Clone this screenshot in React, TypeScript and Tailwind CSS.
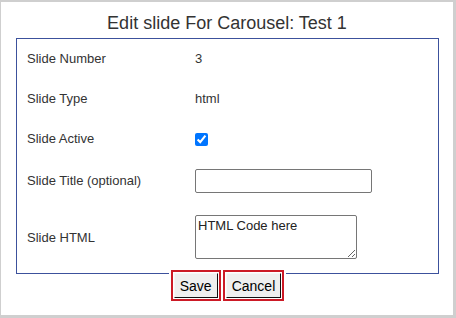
const rows = [
  { label: "Slide Number", value: "3" },
  { label: "Slide Type", value: "html" },
];

const App = () => {
  return (
    <div
      className="w-[456px] h-[318px] bg-white border-t-2 border-l border-r-[3px] border-b-[3px] border-[#cfcfcf] text-[#333] overflow-hidden"
      style={{ fontFamily: '"Liberation Sans", Arial, sans-serif' }}
    >
      <h1 className="text-[18px] leading-[22px] text-center pt-[10px] h-[36px] text-[#333]">
        Edit slide For Carousel: Test 1
      </h1>

      <div className="ml-[15px] w-[423px] h-[236px] border border-[#3c519c] pl-[10px] text-[13px]">
        {rows.map((r) => (
          <div key={r.label} className="flex items-center h-10">
            <span className="w-[168px]">{r.label}</span>
            <span>{r.value}</span>
          </div>
        ))}

        <div className="flex items-center h-10">
          <span className="w-[168px]">Slide Active</span>
          <input
            type="checkbox"
            defaultChecked
            className="m-0 w-[13px] h-[13px] accent-[#0075ff]"
          />
        </div>

        <div className="flex items-center h-[44px]">
          <span className="w-[168px]">Slide Title (optional)</span>
          <input
            type="text"
            className="w-[177px] h-[24px] border border-[#767676] rounded-[2px] px-[2px] text-[13px] outline-none"
          />
        </div>

        <div className="flex items-center h-[68px]">
          <span className="w-[168px] pt-[2px]">Slide HTML</span>
          <textarea
            defaultValue="HTML Code here"
            className="block w-[162px] h-[44px] border border-[#767676] rounded-[2px] p-[2px] text-[13px] leading-[15px] text-[#222] outline-none"
            style={{ fontFamily: '"Liberation Sans", Arial, sans-serif' }}
          />
        </div>
      </div>

      <div className="flex justify-center -mt-[4px] pl-[1px]">
        <div className="flex gap-[2px] px-[2px] bg-white">
          <span className="border-2 border-[#cc1a26] p-[1px]">
            <button className="h-[25px] px-[5px] bg-[#efefef] border border-t-[#f7f7f7] border-l-[#f7f7f7] border-r-[#111] border-b-[#111] text-[14px] text-black leading-none">
              Save
            </button>
          </span>
          <span className="border-2 border-[#cc1a26] p-[1px]">
            <button className="h-[25px] px-[5px] bg-[#efefef] border border-t-[#f7f7f7] border-l-[#f7f7f7] border-r-[#111] border-b-[#111] text-[14px] text-black leading-none">
              Cancel
            </button>
          </span>
        </div>
      </div>
    </div>
  );
};

export default App;
